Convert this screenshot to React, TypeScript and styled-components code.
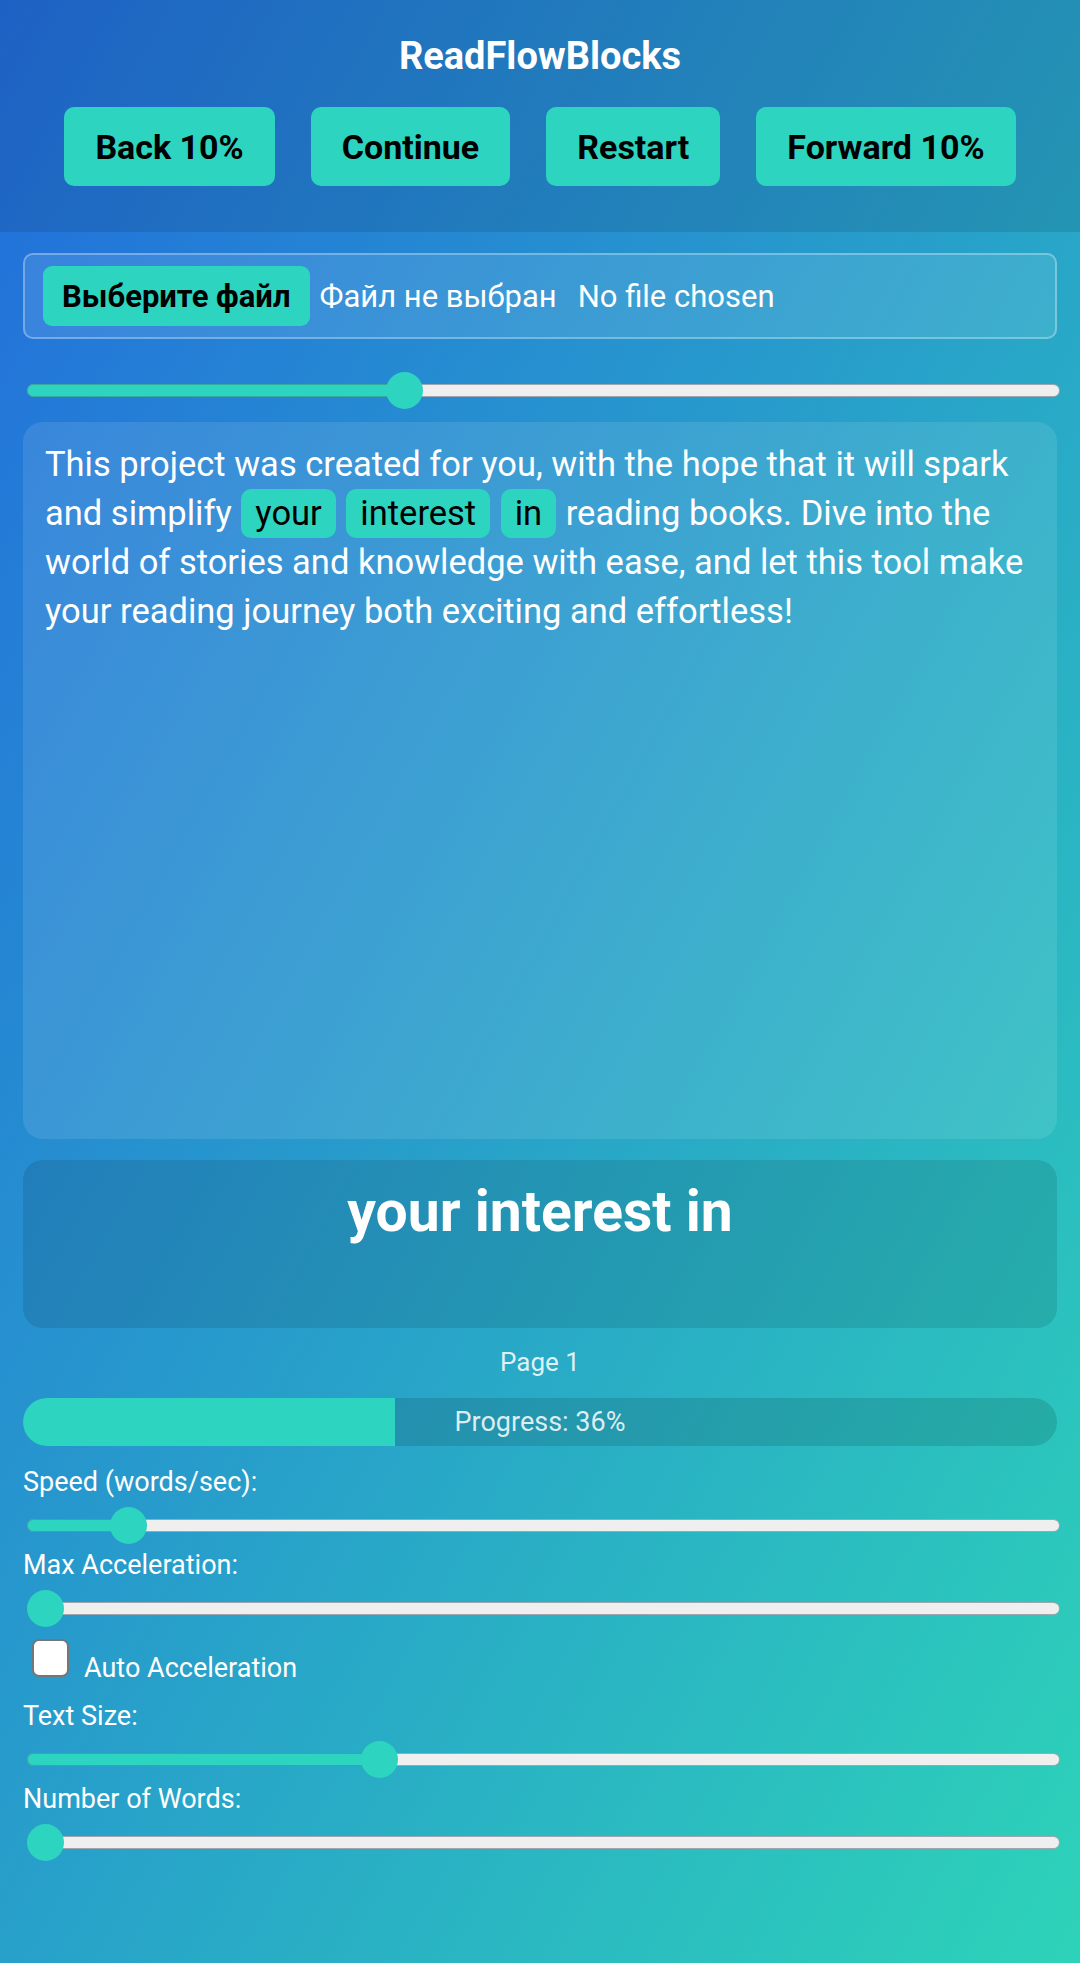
import React from 'react'
import styled, { createGlobalStyle } from 'styled-components'

const teal = '#2dd4bf'

const GlobalStyle = createGlobalStyle`
  html, body {
    margin: 0;
    padding: 0;
  }
  body {
    font-family: Roboto, 'Noto Sans', Arial, sans-serif;
  }
`

function Slider({ value }: { value: number }) {
  // thumb travels between the two ends of the track, minus its own radius
  const pos = `calc(18.5px + (100% - 37px) * ${value})`
  return (
    <SliderRoot>
      <Track>
        <TrackFill style={{ width: pos }} />
      </Track>
      <Thumb style={{ left: pos }} />
    </SliderRoot>
  )
}

function Field({ label, value }: { label: string; value: number }) {
  return (
    <FieldBox>
      <FieldLabel>{label}</FieldLabel>
      <Slider value={value} />
    </FieldBox>
  )
}

export default function App() {
  return (
    <Page>
      <GlobalStyle />
      <Header>
        <Title>ReadFlowBlocks</Title>
        <ButtonRow>
          <NavButton>Back 10%</NavButton>
          <NavButton>Continue</NavButton>
          <NavButton>Restart</NavButton>
          <NavButton>Forward 10%</NavButton>
        </ButtonRow>
      </Header>

      <Main>
        <FileBox>
          <FileButton>Выберите файл</FileButton>
          <FileStatus>Файл не выбран</FileStatus>
          <FileHint>No file chosen</FileHint>
        </FileBox>

        <MainSlider>
          <Slider value={0.36} />
        </MainSlider>

        <TextPanel>
          This project was created for you, with the hope that it will spark and simplify{' '}
          <Highlight>your</Highlight> <Highlight>interest</Highlight> <Highlight>in</Highlight>{' '}
          reading books. Dive into the world of stories and knowledge with ease, and let this tool
          make your reading journey both exciting and effortless!
        </TextPanel>

        <WordPanel>your interest in</WordPanel>

        <PageLabel>Page 1</PageLabel>

        <Progress>
          <ProgressFill style={{ width: '36%' }} />
          <ProgressText>Progress: 36%</ProgressText>
        </Progress>

        <Controls>
          <Field label='Speed (words/sec):' value={0.083} />
          <Field label='Max Acceleration:' value={0} />
          <CheckRow>
            <CheckBox />
            <CheckText>Auto Acceleration</CheckText>
          </CheckRow>
          <Field label='Text Size:' value={0.335} />
          <Field label='Number of Words:' value={0} />
        </Controls>
      </Main>
    </Page>
  )
}

const Page = styled.div`
  min-height: 100vh;
  background: linear-gradient(to bottom right, #226ddc, #2dd3b8);
  color: #fff;
`

const Header = styled.header`
  background: rgba(0, 0, 0, 0.1);
  padding: 34px 0 46px;
  text-align: center;
`

const Title = styled.h1`
  margin: 0 0 29px;
  font-size: 38px;
  line-height: 44px;
  font-weight: 700;
  color: #fff;
`

const ButtonRow = styled.div`
  display: flex;
  justify-content: center;
  gap: 36px;
`

const NavButton = styled.button`
  height: 79px;
  padding: 0 31px;
  border: none;
  border-radius: 10px;
  background: ${teal};
  color: #000;
  font-family: Roboto, sans-serif;
  font-size: 34px;
  font-weight: 700;
`

const Main = styled.main`
  padding: 21px 23px 0;
`

const FileBox = styled.div`
  display: flex;
  align-items: center;
  box-sizing: border-box;
  height: 86px;
  padding: 0 18px;
  border: 2px solid rgba(255, 255, 255, 0.3);
  border-radius: 10px;
  background: rgba(255, 255, 255, 0.1);
  font-size: 31px;
`

const FileButton = styled.span`
  display: flex;
  align-items: center;
  height: 60px;
  padding: 0 19px;
  border-radius: 9px;
  background: ${teal};
  color: #000;
  font-weight: 700;
`

const FileStatus = styled.span`
  margin-left: 10px;
`

const FileHint = styled.span`
  margin-left: 21px;
`

const MainSlider = styled.div`
  margin-top: 33px;
`

const SliderRoot = styled.div`
  position: relative;
  display: flex;
  align-items: center;
  height: 37px;
`

const Track = styled.div`
  position: relative;
  flex: 1;
  box-sizing: border-box;
  height: 13px;
  margin: 0 -3px 0 4px;
  border: 1px solid rgba(60, 80, 100, 0.45);
  border-radius: 7px;
  background: #efefef;
`

const TrackFill = styled.div`
  position: absolute;
  top: -1px;
  bottom: -1px;
  left: -1px;
  border: 1px solid #35ab9d;
  border-radius: 7px;
  background: ${teal};
`

const Thumb = styled.div`
  position: absolute;
  top: 0;
  width: 37px;
  height: 37px;
  margin-left: -14.5px;
  border-radius: 50%;
  background: ${teal};
`

const TextPanel = styled.div`
  box-sizing: border-box;
  height: 717px;
  margin-top: 13px;
  padding: 18px 22px;
  border-radius: 20px;
  background: rgba(255, 255, 255, 0.1);
  font-size: 34.5px;
  line-height: 49px;
`

const Highlight = styled.span`
  margin: 0 1px;
  padding: 4px 14px 5px;
  border-radius: 10px;
  background: ${teal};
  color: #000;
`

const WordPanel = styled.div`
  box-sizing: border-box;
  height: 168px;
  margin-top: 21px;
  padding-top: 18px;
  border-radius: 20px;
  background: rgba(0, 0, 0, 0.1);
  text-align: center;
  font-size: 57px;
  font-weight: 700;
`

const PageLabel = styled.div`
  margin-top: 19px;
  text-align: center;
  font-size: 26px;
  line-height: 30px;
  color: rgba(255, 255, 255, 0.85);
`

const Progress = styled.div`
  display: grid;
  height: 48px;
  margin-top: 21px;
  border-radius: 24px;
  overflow: hidden;
  background: rgba(0, 0, 0, 0.12);
`

const ProgressFill = styled.div`
  grid-area: 1 / 1;
  background: ${teal};
`

const ProgressText = styled.span`
  grid-area: 1 / 1;
  place-self: center;
  font-size: 27px;
  color: rgba(255, 255, 255, 0.85);
`

const Controls = styled.div`
  display: flex;
  flex-direction: column;
  gap: 6px;
  margin-top: 21px;
`

const FieldBox = styled.div`
  display: flex;
  flex-direction: column;
`

const FieldLabel = styled.label`
  margin-bottom: 10px;
  font-size: 27px;
  line-height: 30px;
`

const CheckRow = styled.div`
  display: flex;
  align-items: baseline;
  margin: 6px 0 12px;
`

const CheckBox = styled.div`
  box-sizing: border-box;
  width: 37px;
  height: 38px;
  margin-left: 9px;
  border: 2px solid #767676;
  border-radius: 7px;
  background: #fff;
`

const CheckText = styled.span`
  margin-left: 15px;
  font-size: 27px;
  line-height: 30px;
`
